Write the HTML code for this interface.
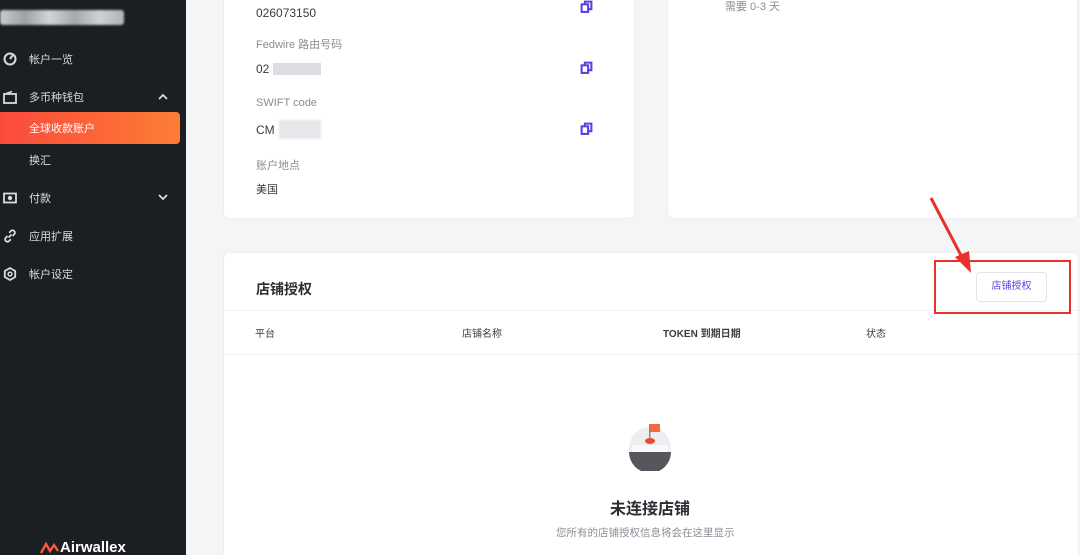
<!DOCTYPE html>
<html><head><meta charset="utf-8"><style>
*{margin:0;padding:0;box-sizing:border-box}
html,body{width:1080px;height:555px;overflow:hidden}
body{background:#f4f5f7;font-family:"Liberation Sans","Noto Sans CJK SC",sans-serif;position:relative;color:#2b2d33}
.sb{position:absolute;left:0;top:0;width:186px;height:555px;background:#1b1e23}
.it{position:absolute;left:0;color:#d8dbe0;font-size:11px;display:flex;align-items:center}
.it .ic{position:absolute;left:3px;top:0;width:14px;height:14px}
.it span{position:absolute;left:29px;white-space:nowrap}
.card{position:absolute;background:#fff;border-radius:6px;border:1px solid #eceef1}
.lbl{position:absolute;left:32px;font-size:11px;color:#8a8d94}
.val{position:absolute;left:32px;font-size:11.5px;color:#3a3c42}
.cp{position:absolute;left:356px}
.blur{position:absolute;background:#dcdde0}
.col{position:absolute;top:325px;font-size:10px;color:#3a3c42}
</style></head><body>
<div class="sb">
  <div style="position:absolute;left:0;top:10px;width:124px;height:15px;background:linear-gradient(90deg,#c9cbcf,#9ea1a6,#d2d4d7,#a5a8ad,#cfd1d4,#b0b3b7);border-radius:3px;filter:blur(1px)"></div>
  <div class="it" style="top:52px;height:14px"><svg class="ic" viewBox="0 0 14 14"><circle cx="7" cy="7" r="5.5" fill="none" stroke="#d8dbe0" stroke-width="2"/><path d="M7 7L9.5 3.5" stroke="#d8dbe0" stroke-width="2"/></svg><span>帐户一览</span></div>
  <div class="it" style="top:90px;height:14px"><svg class="ic" viewBox="0 0 14 14"><rect x="1" y="4" width="12" height="9" fill="none" stroke="#d8dbe0" stroke-width="1.8"/><path d="M2 4L9 1.5" stroke="#d8dbe0" stroke-width="1.6"/></svg><span>多币种钱包</span><svg style="position:absolute;left:158px;top:3px" width="10" height="7" viewBox="0 0 10 7"><path d="M1 6L5 2L9 6" fill="none" stroke="#d8dbe0" stroke-width="1.8"/></svg></div>
  <div style="position:absolute;left:0;top:112px;width:180px;height:32px;border-radius:0 4px 4px 0;background:linear-gradient(90deg,#fb4a3c,#fd7d35)"></div>
  <div class="it" style="top:121px;height:14px;color:#fff"><span>全球收款账户</span></div>
  <div class="it" style="top:153px;height:14px"><span>换汇</span></div>
  <div class="it" style="top:191px;height:14px"><svg class="ic" viewBox="0 0 14 14"><rect x="1" y="2.5" width="12" height="9" fill="none" stroke="#d8dbe0" stroke-width="1.8"/><circle cx="7" cy="7" r="2.2" fill="#d8dbe0"/></svg><span>付款</span><svg style="position:absolute;left:158px;top:3px" width="10" height="7" viewBox="0 0 10 7"><path d="M1 1L5 5L9 1" fill="none" stroke="#d8dbe0" stroke-width="1.8"/></svg></div>
  <div class="it" style="top:229px;height:14px"><svg class="ic" viewBox="0 0 14 14"><path d="M5.5 8.5L8.5 5.5M4.5 7L2.8 8.7a2.3 2.3 0 003.3 3.3L7.8 10.3M9.5 7l1.7-1.7a2.3 2.3 0 00-3.3-3.3L6.2 3.7" fill="none" stroke="#d8dbe0" stroke-width="1.8"/></svg><span>应用扩展</span></div>
  <div class="it" style="top:267px;height:14px"><svg class="ic" viewBox="0 0 14 14"><path d="M7 1L12.2 4v6L7 13 1.8 10V4z" fill="none" stroke="#d8dbe0" stroke-width="1.8"/><circle cx="7" cy="7" r="1.9" fill="none" stroke="#d8dbe0" stroke-width="1.5"/></svg><span>帐户设定</span></div>
  <div style="position:absolute;left:40px;top:539px;color:#fff;font-weight:bold;font-size:15px;display:flex;align-items:center"><svg width="20" height="12" viewBox="0 0 20 12"><path d="M1 11L6 2L10 9L14 3L18 9" fill="none" stroke="#fb5a3a" stroke-width="2.4"/></svg>Airwallex</div>
</div>

<div class="card" style="left:223px;top:-10px;width:412px;height:229px">
  <div class="val" style="top:15px;font-size:12px">026073150</div>
  <div class="lbl" style="top:45px">Fedwire 路由号码</div>
  <div class="val" style="top:71px;font-size:12px">02</div><div class="blur" style="left:49px;top:72px;width:48px;height:12px"></div>
  <div class="lbl" style="top:106px">SWIFT code</div>
  <div class="val" style="top:132px;font-size:12px">CM</div><div class="blur" style="left:55px;top:129px;width:42px;height:19px;background:#e6e7ea;filter:blur(1px)"></div>
  <div class="lbl" style="top:166px">账户地点</div>
  <div class="val" style="top:190px;font-size:11px">美国</div>
  <svg class="cp" style="top:9px" width="13" height="13" viewBox="0 0 12 12"><rect x="1.5" y="4" width="6" height="7" fill="none" stroke="#5b3fe0" stroke-width="1.9"/><path d="M4.5 4V1.5h6v7H7.5" fill="none" stroke="#5b3fe0" stroke-width="1.9"/></svg>
  <svg class="cp" style="top:70px" width="13" height="13" viewBox="0 0 12 12"><rect x="1.5" y="4" width="6" height="7" fill="none" stroke="#5b3fe0" stroke-width="1.9"/><path d="M4.5 4V1.5h6v7H7.5" fill="none" stroke="#5b3fe0" stroke-width="1.9"/></svg>
  <svg class="cp" style="top:131px" width="13" height="13" viewBox="0 0 12 12"><rect x="1.5" y="4" width="6" height="7" fill="none" stroke="#5b3fe0" stroke-width="1.9"/><path d="M4.5 4V1.5h6v7H7.5" fill="none" stroke="#5b3fe0" stroke-width="1.9"/></svg>
</div>
<div class="card" style="left:667px;top:-10px;width:411px;height:229px">
  <div style="position:absolute;left:57px;top:7px;font-size:11px;color:#8a8d94">需要 0-3 天</div>
</div>

<div class="card" style="left:223px;top:252px;width:856px;height:310px">
  <div style="position:absolute;left:32px;top:26px;font-size:14px;font-weight:bold;color:#2b2d33">店铺授权</div>
  <div style="position:absolute;left:752px;top:19px;width:71px;height:30px;border:1px solid #e3e4e8;border-radius:4px;font-size:10px;color:#5b3fe0;text-align:center;line-height:28px">店铺授权</div>
  <div style="position:absolute;left:0;top:57px;width:100%;height:1px;background:#eef0f2"></div>
  <div style="position:absolute;left:0;top:101px;width:100%;height:1px;background:#eef0f2"></div>
</div>
<div class="col" style="left:255px">平台</div>
<div class="col" style="left:462px">店铺名称</div>
<div class="col" style="left:663px;font-weight:bold">TOKEN 到期日期</div>
<div class="col" style="left:866px">状态</div>

<svg style="position:absolute;left:627px;top:421px" width="46" height="50" viewBox="0 0 46 50">
  <circle cx="23" cy="27" r="21" fill="#eceef1"/>
  <path d="M2 31h42a21 21 0 01-42 0z" fill="#55575c"/>
  <rect x="5" y="24" width="36" height="7" fill="#fafafa"/>
  <rect x="22" y="3" width="1.5" height="16" fill="#888"/>
  <path d="M23 3h10v8H23z" fill="#f46b3b"/>
  <ellipse cx="23" cy="20" rx="5" ry="3" fill="#f0472f"/>
</svg>
<div style="position:absolute;left:610px;top:495px;font-size:16px;font-weight:bold;color:#2b2d33">未连接店铺</div>
<div style="position:absolute;left:556px;top:525px;font-size:10.5px;color:#8a8d94">您所有的店铺授权信息将会在这里显示</div>

<div style="position:absolute;left:934px;top:260px;width:137px;height:54px;border:2px solid #e8312a"></div>
<svg style="position:absolute;left:925px;top:195px" width="50" height="80" viewBox="0 0 50 80"><path d="M6 3L40 68" stroke="#e8312a" stroke-width="3"/><path d="M30 62L46 78L44 56z" fill="#e8312a"/></svg>
</body></html>
